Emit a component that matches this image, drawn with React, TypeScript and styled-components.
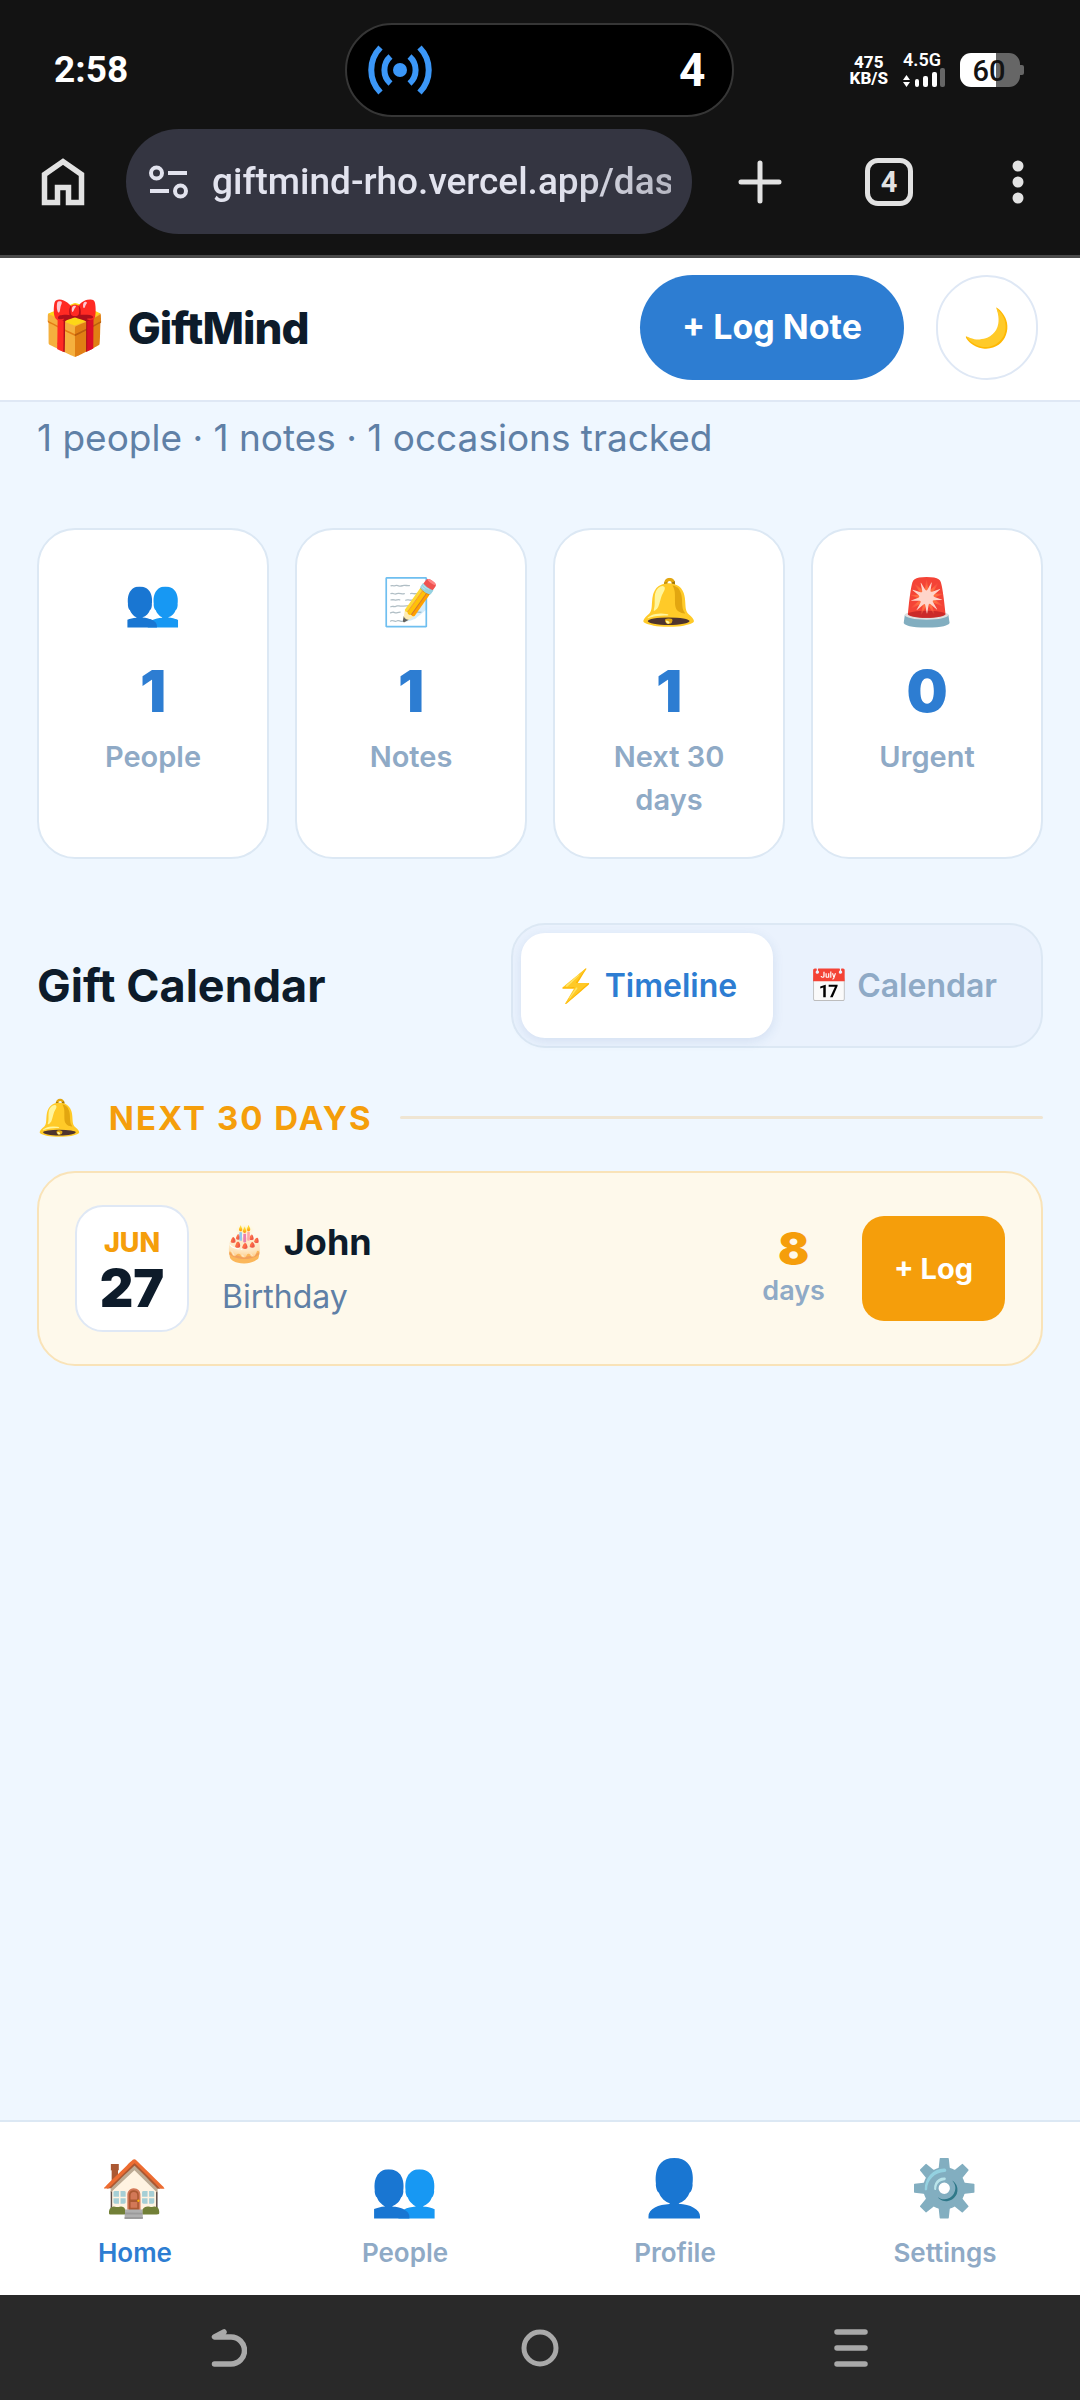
import { useState } from "react";
import styled, { createGlobalStyle } from "styled-components";

const GlobalStyle = createGlobalStyle`
  * {
    box-sizing: border-box;
  }
  body {
    margin: 0;
    background: #eff7ff;
    color: #0d1b2a;
    font-family: Inter, "Noto Color Emoji", sans-serif;
  }
  button, input {
    margin: 0;
    padding: 0;
    border: 0;
    background: none;
    font-family: inherit;
    cursor: pointer;
  }
  h1, h2, h3, p {
    margin: 0;
  }
  a {
    text-decoration: none;
  }
  svg {
    display: block;
    flex: none;
  }
`;

const Page = styled.div`
  min-height: 100vh;
  display: flex;
  flex-direction: column;
`;

/* phone status bar */

const StatusBar = styled.div`
  display: grid;
  grid-template-columns: 1fr 389px 1fr;
  align-items: center;
  padding: 23px 56px 0 54px;
  background: #131313;
  color: white;
  font-family: Roboto, sans-serif;
`;

const Clock = styled.div`
  font-size: 37px;
  font-weight: 700;
  line-height: 44px;
`;

const Island = styled.div`
  display: flex;
  align-items: center;
  justify-content: space-between;
  height: 94px;
  padding: 0 26px 0 20px;
  border: 2px solid #363636;
  border-radius: 48px;
  background: black;
  font-size: 46px;
  font-weight: 700;
`;

const StatusIcons = styled.div`
  display: flex;
  align-items: center;
  justify-content: flex-end;
  gap: 15px;
`;

const Speed = styled.div`
  font-size: 17px;
  font-weight: 800;
  line-height: 16px;
  text-align: center;
`;

const Network = styled.div`
  font-size: 18px;
  font-weight: 600;
  line-height: 16px;
`;

/* browser toolbar */

const Toolbar = styled.div`
  display: flex;
  align-items: center;
  padding: 12px 32px 21px 33px;
  border-bottom: 3px solid #4a4a4a;
  background: #131313;
  color: #e2e2e2;
`;

const ToolButton = styled.button`
  flex: none;
  display: flex;
  align-items: center;
  justify-content: center;
  width: 60px;
  height: 60px;
  color: inherit;
`;

const UrlBar = styled.label`
  flex: 1;
  display: flex;
  align-items: center;
  gap: 24px;
  min-width: 0;
  height: 105px;
  margin: 0 38px 0 33px;
  padding: 0 21px 0 23px;
  border-radius: 53px;
  background: #343541;
`;

const UrlInput = styled.input`
  flex: 1;
  min-width: 0;
  height: 60px;
  color: #e2e3ee;
  font-family: Roboto, sans-serif;
  font-size: 37px;
  font-weight: 500;
  outline: none;
  mask-image: linear-gradient(to right, black 75%, rgba(0, 0, 0, 0.75));
`;

const ToolActions = styled.div`
  flex: none;
  display: flex;
  gap: 69px;
`;

const TabCount = styled.span`
  display: flex;
  align-items: center;
  justify-content: center;
  width: 48px;
  height: 48px;
  border: 5px solid #e2e2e2;
  border-radius: 13px;
  font-family: Roboto, sans-serif;
  font-size: 29px;
  font-weight: 700;
`;

/* app header */

const Header = styled.header`
  display: flex;
  align-items: center;
  gap: 32px;
  padding: 17px 42px 20px;
  border-bottom: 2px solid #dfe8f5;
  background: white;
`;

const Brand = styled.h1`
  flex: 1;
  display: flex;
  align-items: center;
  gap: 22px;
  font-size: 44px;
  font-weight: 800;
  letter-spacing: -1px;
`;

const BrandIcon = styled.span`
  font-size: 52px;
  line-height: 64px;
`;

const LogNoteButton = styled.button`
  height: 105px;
  padding: 0 42px 2px;
  border-radius: 53px;
  background: #2d7dd2;
  color: white;
  font-size: 34px;
  font-weight: 700;
`;

const ThemeButton = styled.button`
  width: 102px;
  height: 105px;
  padding-bottom: 2px;
  border: 2px solid #dfe8f5;
  border-radius: 53px;
  font-size: 38px;
`;

/* dashboard */

const Main = styled.main`
  flex: 1;
  padding: 7px 37px 0;
`;

const Summary = styled.p`
  margin-bottom: 61px;
  color: #5f80a6;
  font-size: 37px;
  line-height: 58px;
`;

const Stats = styled.section`
  display: grid;
  grid-template-columns: repeat(4, 1fr);
  gap: 26px;
`;

const StatCard = styled.div`
  display: flex;
  flex-direction: column;
  align-items: center;
  padding: 36px 26px;
  border: 2px solid #dce8f4;
  border-radius: 38px;
  background: white;
  text-align: center;
`;

const StatIcon = styled.span`
  margin-bottom: 26px;
  font-size: 46px;
  line-height: 70px;
`;

const StatValue = styled.span`
  margin-bottom: 15px;
  color: #2d7dd2;
  font-size: 58px;
  font-weight: 900;
  line-height: 58px;
`;

const StatLabel = styled.span`
  color: #8faac6;
  font-size: 29px;
  font-weight: 600;
  line-height: 43px;
`;

const CalendarHead = styled.div`
  display: flex;
  align-items: center;
  justify-content: space-between;
  margin-top: 64px;
`;

const CalendarTitle = styled.h2`
  font-size: 45px;
  font-weight: 700;
`;

const Toggle = styled.div`
  display: flex;
  padding: 8px;
  border: 2px solid #dce8f4;
  border-radius: 34px;
  background: #eaf2fd;
`;

const ToggleButton = styled.button<{ $active: boolean }>`
  height: 105px;
  padding: 0 36px;
  border-radius: 24px;
  background: ${(props) => (props.$active ? "white" : "transparent")};
  box-shadow: ${(props) => (props.$active ? "0 3px 12px rgba(45, 90, 160, 0.12)" : "none")};
  color: ${(props) => (props.$active ? "#2d7dd2" : "#8faac6")};
  font-size: 32px;
  font-weight: 600;
`;

const GroupHead = styled.div`
  display: flex;
  align-items: center;
  gap: 27px;
  margin: 41px 0 25px;
  color: #f59e0b;
`;

const GroupIcon = styled.span`
  font-size: 36px;
  line-height: 57px;
`;

const GroupTitle = styled.h3`
  font-size: 33px;
  font-weight: 700;
  letter-spacing: 2px;
`;

const GroupLine = styled.div`
  flex: 1;
  height: 3px;
  border-radius: 2px;
  background: #efe5d3;
`;

const EventCard = styled.article`
  display: flex;
  align-items: center;
  padding: 32px 36px;
  border: 2px solid #f9e3b8;
  border-radius: 38px;
  background: #fef9eb;
`;

const DateBox = styled.div`
  display: flex;
  flex-direction: column;
  align-items: center;
  min-width: 114px;
  margin-right: 33px;
  padding: 18px 20px 12px;
  border: 2px solid #dfe8f5;
  border-radius: 28px;
  background: white;
`;

const Month = styled.span`
  color: #f59e0b;
  font-size: 27px;
  font-weight: 800;
  line-height: 35px;
`;

const Day = styled.span`
  font-size: 52px;
  font-weight: 900;
  line-height: 58px;
`;

const EventInfo = styled.div`
  flex: 1;
  display: flex;
  flex-direction: column;
`;

const EventName = styled.div`
  display: flex;
  align-items: center;
  gap: 17px;
  font-size: 36px;
  font-weight: 700;
  line-height: 56px;
`;

const EventType = styled.div`
  color: #5f80a6;
  font-size: 32px;
  line-height: 54px;
`;

const Countdown = styled.div`
  display: flex;
  flex-direction: column;
  align-items: center;
  margin-right: 37px;
  padding-bottom: 4px;
  color: #8faac6;
  font-size: 27px;
  font-weight: 600;
  line-height: 38px;
`;

const CountdownValue = styled.span`
  color: #f59e0b;
  font-size: 46px;
  font-weight: 900;
  line-height: 48px;
`;

const LogButton = styled.button`
  height: 105px;
  padding: 0 32px;
  border-radius: 22px;
  background: #f59e0b;
  color: white;
  font-size: 29px;
  font-weight: 700;
`;

/* bottom bars */

const TabBar = styled.nav`
  display: grid;
  grid-template-columns: repeat(4, 1fr);
  padding: 21px 0 20px;
  border-top: 2px solid #dce8f4;
  background: white;
`;

const Tab = styled.a<{ $active: boolean }>`
  display: flex;
  flex-direction: column;
  align-items: center;
  color: ${(props) => (props.$active ? "#2d7dd2" : "#8faac6")};
  font-size: 26px;
  font-weight: 600;
  line-height: 44px;
`;

const TabIcon = styled.span`
  font-size: 55px;
  font-weight: 400;
  line-height: 88px;
`;

const SystemBar = styled.div`
  display: grid;
  grid-template-columns: repeat(3, 1fr);
  justify-items: center;
  align-items: center;
  height: 105px;
  padding: 0 74px;
  background: #292929;
  color: #a9a9a9;
`;

const stats = [
  { icon: "👥", value: 1, label: "People" },
  { icon: "📝", value: 1, label: "Notes" },
  { icon: "🔔", value: 1, label: "Next 30 days" },
  { icon: "🚨", value: 0, label: "Urgent" },
];

const tabs = [
  { icon: "🏠", label: "Home" },
  { icon: "👥", label: "People" },
  { icon: "👤", label: "Profile" },
  { icon: "⚙️", label: "Settings" },
];

const views = [
  { id: "timeline", label: "⚡ Timeline" },
  { id: "calendar", label: "📅 Calendar" },
];

const HotspotIcon = () => (
  <svg width="66" height="50" viewBox="0 0 66 50" fill="none" stroke="#3b97f8" strokeWidth="6">
    <circle cx="33" cy="25" r="7" fill="#3b97f8" stroke="none" />
    <path d="M23.500 11.500A18 18 0 0 0 23.500 38.500M42.500 11.500A18 18 0 0 1 42.500 38.500" />
    <path d="M13.500 2.500A32 32 0 0 0 13.500 47.500M52.500 2.500A32 32 0 0 1 52.500 47.500" />
  </svg>
);

const SignalIcon = () => (
  <svg width="42" height="20" viewBox="0 0 42 20" fill="white">
    <path d="M3.500 7l3.500 5H0zM3.500 19l3.500-5H0z" />
    <rect x="12" y="11" width="4" height="8" rx="2" />
    <rect x="20" y="8" width="5" height="11" rx="2" />
    <rect x="29" y="4" width="5" height="15" rx="2" />
    <rect x="37" y="0" width="5" height="19" rx="2" fill="#666" />
  </svg>
);

const BatteryIcon = () => (
  <svg width="64" height="34" viewBox="0 0 64 34">
    <path d="M11 0h25v34H11A11 11 0 0 1 0 23V11A11 11 0 0 1 11 0z" fill="white" />
    <path d="M36 0h13a11 11 0 0 1 11 11v1h2q2 0 2 2v6q0 2-2 2h-2v1a11 11 0 0 1-11 11H36z" fill="#666" />
    <text x="29" y="28" fill="#131313" fontFamily="Roboto, sans-serif" fontSize="29" fontWeight="500" textAnchor="middle">60</text>
  </svg>
);

const HomeIcon = () => (
  <svg width="44" height="50" viewBox="0 0 44 50" fill="none" stroke="currentColor" strokeWidth="5.500">
    <path d="M3.500 45.500V17.500L22 4.500L40.500 17.500V45.500H27.500V30.500H16.500V45.500z" />
  </svg>
);

const SiteIcon = () => (
  <svg width="39" height="34" viewBox="0 0 39 34" fill="none" stroke="#e2e3ee" strokeWidth="4">
    <circle cx="7.500" cy="8" r="5.500" />
    <circle cx="31.500" cy="26" r="5.500" />
    <path d="M19 8H38M1 26H20" />
  </svg>
);

const PlusIcon = () => (
  <svg width="44" height="44" viewBox="0 0 44 44" stroke="currentColor" strokeWidth="5" strokeLinecap="round">
    <path d="M22 3V41M3 22H41" />
  </svg>
);

const MoreIcon = () => (
  <svg width="12" height="44" viewBox="0 0 12 44" fill="currentColor">
    <circle cx="6" cy="6" r="5.500" />
    <circle cx="6" cy="22" r="5.500" />
    <circle cx="6" cy="38" r="5.500" />
  </svg>
);

const BackIcon = () => (
  <svg width="36" height="40" viewBox="0 0 36 40" fill="none" stroke="currentColor" strokeWidth="5.500" strokeLinecap="round" strokeLinejoin="round">
    <path d="M13 4L3.500 9H20A13.500 13.500 0 0 1 20 36H3.500" />
  </svg>
);

const CircleIcon = () => (
  <svg width="38" height="38" viewBox="0 0 38 38" fill="none" stroke="currentColor" strokeWidth="5">
    <circle cx="19" cy="19" r="16" />
  </svg>
);

const MenuIcon = () => (
  <svg width="36" height="40" viewBox="0 0 36 40" stroke="currentColor" strokeWidth="5.500" strokeLinecap="round">
    <path d="M4 4H32M4 20H32M4 36H32" />
  </svg>
);

const App = () => {
  const [view, setView] = useState("timeline");

  return (
    <Page>
      <GlobalStyle />
      <StatusBar>
        <Clock>2:58</Clock>
        <Island>
          <HotspotIcon />
          <span>4</span>
        </Island>
        <StatusIcons>
          <Speed>
            475
            <br />
            KB/S
          </Speed>
          <Network>
            4.5G
            <SignalIcon />
          </Network>
          <BatteryIcon />
        </StatusIcons>
      </StatusBar>

      <Toolbar>
        <ToolButton aria-label="Home page">
          <HomeIcon />
        </ToolButton>
        <UrlBar>
          <SiteIcon />
          <UrlInput aria-label="Address" type="text" defaultValue="giftmind-rho.vercel.app/dashboard" />
        </UrlBar>
        <ToolActions>
          <ToolButton aria-label="New tab">
            <PlusIcon />
          </ToolButton>
          <ToolButton aria-label="Open tabs">
            <TabCount>4</TabCount>
          </ToolButton>
          <ToolButton aria-label="More">
            <MoreIcon />
          </ToolButton>
        </ToolActions>
      </Toolbar>

      <Header>
        <Brand>
          <BrandIcon>🎁</BrandIcon>
          GiftMind
        </Brand>
        <LogNoteButton>+ Log Note</LogNoteButton>
        <ThemeButton aria-label="Dark mode">🌙</ThemeButton>
      </Header>

      <Main>
        <Summary>1 people · 1 notes · 1 occasions tracked</Summary>
        <Stats>
          {stats.map((stat) => (
            <StatCard key={stat.label}>
              <StatIcon>{stat.icon}</StatIcon>
              <StatValue>{stat.value}</StatValue>
              <StatLabel>{stat.label}</StatLabel>
            </StatCard>
          ))}
        </Stats>

        <CalendarHead>
          <CalendarTitle>Gift Calendar</CalendarTitle>
          <Toggle>
            {views.map((item) => (
              <ToggleButton key={item.id} $active={view === item.id} onClick={() => setView(item.id)}>
                {item.label}
              </ToggleButton>
            ))}
          </Toggle>
        </CalendarHead>

        <GroupHead>
          <GroupIcon>🔔</GroupIcon>
          <GroupTitle>NEXT 30 DAYS</GroupTitle>
          <GroupLine />
        </GroupHead>

        <EventCard>
          <DateBox>
            <Month>JUN</Month>
            <Day>27</Day>
          </DateBox>
          <EventInfo>
            <EventName>
              <span>🎂</span>
              John
            </EventName>
            <EventType>Birthday</EventType>
          </EventInfo>
          <Countdown>
            <CountdownValue>8</CountdownValue>
            days
          </Countdown>
          <LogButton>+ Log</LogButton>
        </EventCard>
      </Main>

      <TabBar>
        {tabs.map((tab) => (
          <Tab key={tab.label} href="#" $active={tab.label === "Home"}>
            <TabIcon>{tab.icon}</TabIcon>
            {tab.label}
          </Tab>
        ))}
      </TabBar>

      <SystemBar>
        <ToolButton aria-label="Back">
          <BackIcon />
        </ToolButton>
        <ToolButton aria-label="Home screen">
          <CircleIcon />
        </ToolButton>
        <ToolButton aria-label="Recent apps">
          <MenuIcon />
        </ToolButton>
      </SystemBar>
    </Page>
  );
};

export default App;
